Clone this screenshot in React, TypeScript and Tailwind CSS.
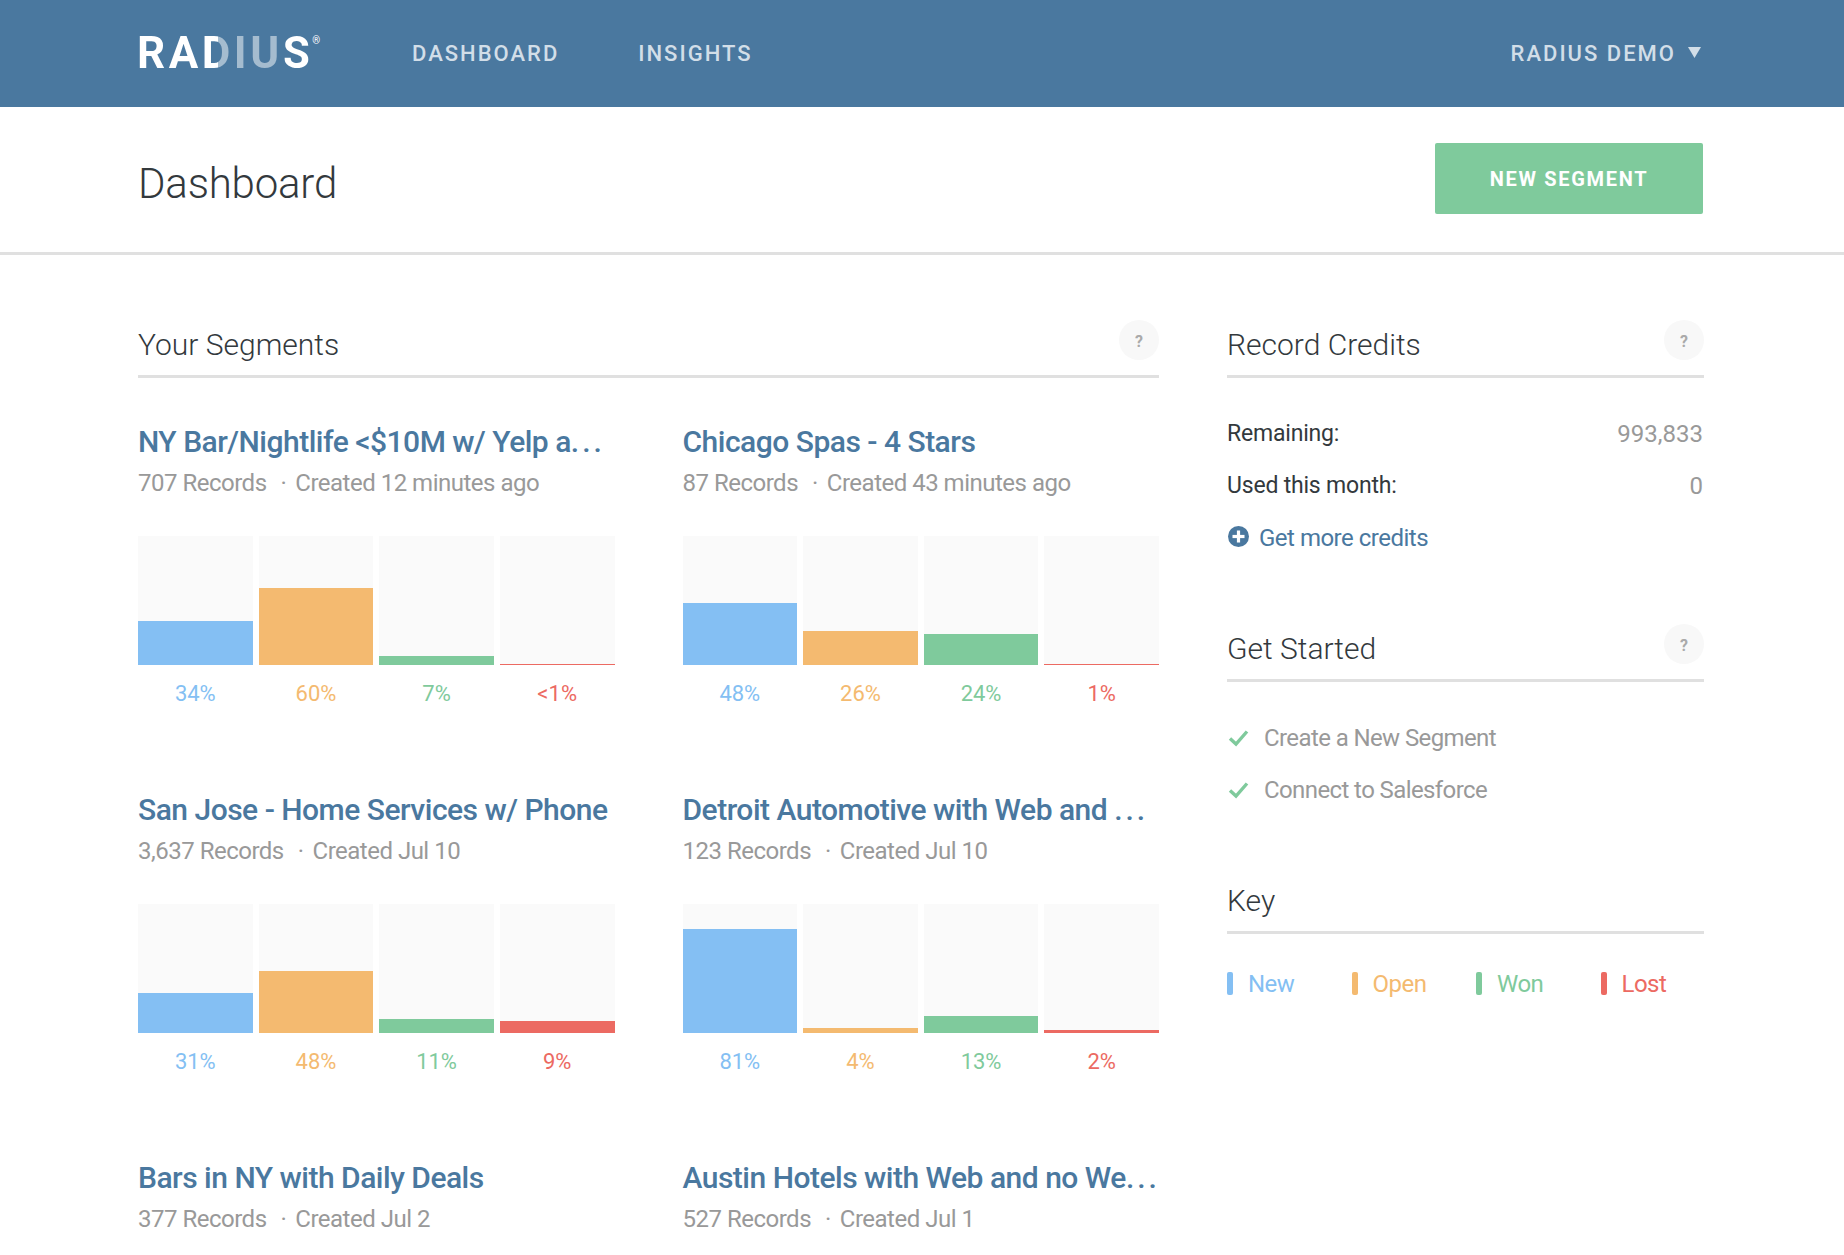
const SANS = "font-['Roboto','Liberation_Sans',sans-serif]";

interface Bar {
  pct: number;
  label: string;
}

interface Segment {
  title: string;
  records: string;
  created: string;
  cut?: boolean;
  bars?: Bar[];
}

const BAR_STYLES = [
  { fill: "bg-[#84bff3]", text: "text-[#84bff3]" },
  { fill: "bg-[#f4ba70]", text: "text-[#f4ba70]" },
  { fill: "bg-[#7fca9c]", text: "text-[#7fca9c]" },
  { fill: "bg-[#ec6a62]", text: "text-[#ec6a62]" },
];

const SEGMENTS: Segment[] = [
  {
    title: "NY Bar/Nightlife <$10M w/ Yelp a",
    cut: true,
    records: "707 Records",
    created: "Created 12 minutes ago",
    bars: [
      { pct: 34, label: "34%" },
      { pct: 60, label: "60%" },
      { pct: 7, label: "7%" },
      { pct: 1, label: "<1%" },
    ],
  },
  {
    title: "Chicago Spas - 4 Stars",
    records: "87 Records",
    created: "Created 43 minutes ago",
    bars: [
      { pct: 48, label: "48%" },
      { pct: 26, label: "26%" },
      { pct: 24, label: "24%" },
      { pct: 1, label: "1%" },
    ],
  },
  {
    title: "San Jose - Home Services w/ Phone",
    records: "3,637 Records",
    created: "Created Jul 10",
    bars: [
      { pct: 31, label: "31%" },
      { pct: 48, label: "48%" },
      { pct: 11, label: "11%" },
      { pct: 9, label: "9%" },
    ],
  },
  {
    title: "Detroit Automotive with Web and ",
    cut: true,
    records: "123 Records",
    created: "Created Jul 10",
    bars: [
      { pct: 81, label: "81%" },
      { pct: 4, label: "4%" },
      { pct: 13, label: "13%" },
      { pct: 2, label: "2%" },
    ],
  },
  { title: "Bars in NY with Daily Deals", records: "377 Records", created: "Created Jul 2" },
  { title: "Austin Hotels with Web and no We", cut: true, records: "527 Records", created: "Created Jul 1" },
];

const KEY_ITEMS = [
  { label: "New", bar: "bg-[#84bff3]", text: "text-[#84bff3]" },
  { label: "Open", bar: "bg-[#f4ba70]", text: "text-[#f4ba70]" },
  { label: "Won", bar: "bg-[#7fca9c]", text: "text-[#7fca9c]" },
  { label: "Lost", bar: "bg-[#ec6a62]", text: "text-[#ec6a62]" },
];

function SectionHeader({ title, help = true }: { title: string; help?: boolean }) {
  return (
    <div className="h-[57px] flex items-start justify-between border-b-[3px] border-[#e0e0e0]">
      <h2 className="text-[30px] leading-[48px] font-light text-[#33393d]">{title}</h2>
      {help && (
        <div className="w-10 h-10 -mt-[1px] pt-[3px] rounded-full bg-[#f8f8f8] flex items-center justify-center text-[16px] font-bold text-[#aaaaaa]">
          ?
        </div>
      )}
    </div>
  );
}

function SegmentCard({ segment }: { segment: Segment }) {
  return (
    <div className="h-[368px] min-w-0">
      <h3 className="mt-11 text-[30px] leading-10 font-medium tracking-[-0.5px] text-[#4a789f] whitespace-pre">
        {segment.title}
        {segment.cut && <span className="tracking-[3px]">...</span>}
      </h3>
      <p className="mt-1 text-[24px] leading-[34px] tracking-[-0.5px] text-[#999999] whitespace-nowrap">
        {segment.records}
        <span className="ml-[14px] mr-[9px]">·</span>
        {segment.created}
      </p>
      {segment.bars && (
        <div className="mt-9 grid grid-cols-4 gap-[6px]">
          {segment.bars.map((bar, i) => (
            <div key={i}>
              <div className="h-[129px] bg-[#fafafa] flex items-end">
                <div className={`w-full ${BAR_STYLES[i].fill}`} style={{ height: `${bar.pct}%` }} />
              </div>
              <div className={`mt-[14px] text-center text-[22px] leading-[30px] ${BAR_STYLES[i].text}`}>{bar.label}</div>
            </div>
          ))}
        </div>
      )}
    </div>
  );
}

function CreditRow({ label, value }: { label: string; value: string }) {
  return (
    <div className="h-[52px] flex items-center justify-between pr-[1px]">
      <span className="text-[23px] tracking-[-0.2px] text-[#33393d]">{label}</span>
      <span className="text-[24px] text-[#999999]">{value}</span>
    </div>
  );
}

function CheckRow({ label }: { label: string }) {
  return (
    <div className="h-[52px] flex items-center">
      <svg width="21" height="18" viewBox="0 0 21 18" className="ml-[1px] mr-[15px]" fill="none">
        <path d="M2 9.5 L8 15 L19 2.5" stroke="#7fca9c" strokeWidth="3.4" />
      </svg>
      <span className="text-[24px] tracking-[-0.6px] text-[#999999]">{label}</span>
    </div>
  );
}

export default function App() {
  return (
    <main className={`h-screen overflow-hidden bg-white ${SANS}`}>
      <header className="h-[107px] bg-[#4a789f] flex items-center pl-[137px] pr-[143px]">
        <div className="w-[275px] flex items-start -mt-[2px]">
          <span className="text-[44px] leading-[48px] font-bold tracking-[3.5px] text-transparent bg-clip-text bg-[linear-gradient(90deg,#ffffff_0%,#ffffff_46%,#a5bccf_46%,#a5bccf_84%,#ffffff_84%)]">
            RADIUS
          </span>
          <span className="text-[10px] leading-none mt-[7px] -ml-[1px] text-white">®</span>
        </div>
        <nav className="flex gap-[79px] text-[22px] font-medium tracking-[2px] text-[#d2dee8]">
          <a>DASHBOARD</a>
          <a>INSIGHTS</a>
        </nav>
        <div className="ml-auto flex items-center gap-[12px] text-[22px] font-medium tracking-[2px] text-[#d2dee8]">
          RADIUS DEMO
          <svg width="13" height="11" viewBox="0 0 13 11" className="-mt-[2px]">
            <polygon points="0,0 13,0 6.5,11" fill="#d2dee8" />
          </svg>
        </div>
      </header>

      <div className="h-[148px] border-b-[3px] border-[#e0e0e0] flex items-start justify-between pl-[138px] pr-[141px]">
        <h1 className="mt-[47px] text-[42px] leading-[60px] font-light tracking-[-0.2px] text-[#33393d]">Dashboard</h1>
        <button className="mt-9 w-[268px] h-[71px] pt-[1px] rounded-[2px] bg-[#7fca9c] text-white text-[20px] font-bold tracking-[1.7px]">
          NEW SEGMENT
        </button>
      </div>

      <div className="flex gap-[68px] pl-[138px] pt-[66px]">
        <section className="w-[1021px] shrink-0">
          <SectionHeader title="Your Segments" />
          <div className="grid grid-cols-2 gap-x-[68px]">
            {SEGMENTS.map((segment) => (
              <SegmentCard key={segment.title} segment={segment} />
            ))}
          </div>
        </section>

        <aside className="w-[477px] shrink-0">
          <SectionHeader title="Record Credits" />
          <div className="mt-[30px]">
            <CreditRow label="Remaining:" value="993,833" />
            <CreditRow label="Used this month:" value="0" />
            <div className="h-[52px] flex items-center text-[24px] tracking-[-0.5px] text-[#4a789f]">
              <svg width="21" height="21" viewBox="0 0 21 21" className="ml-[1px] mr-[10px] -mt-[3px]">
                <circle cx="10.5" cy="10.5" r="10.5" fill="#4a789f" />
                <rect x="4.5" y="8.9" width="12" height="3.2" fill="#ffffff" />
                <rect x="8.9" y="4.5" width="3.2" height="12" fill="#ffffff" />
              </svg>
              Get more credits
            </div>
          </div>

          <div className="mt-[61px]">
            <SectionHeader title="Get Started" />
            <div className="mt-[30px]">
              <CheckRow label="Create a New Segment" />
              <CheckRow label="Connect to Salesforce" />
            </div>
          </div>

          <div className="mt-[61px]">
            <SectionHeader title="Key" help={false} />
            <div className="mt-[35px] grid grid-cols-4 w-[498px]">
              {KEY_ITEMS.map((item) => (
                <div key={item.label} className="h-[30px] flex items-center">
                  <span className={`w-[6px] h-[23px] rounded-[2px] mr-[15px] -mt-[1px] ${item.bar}`} />
                  <span className={`text-[24px] tracking-[-0.5px] ${item.text}`}>{item.label}</span>
                </div>
              ))}
            </div>
          </div>
        </aside>
      </div>
    </main>
  );
}
